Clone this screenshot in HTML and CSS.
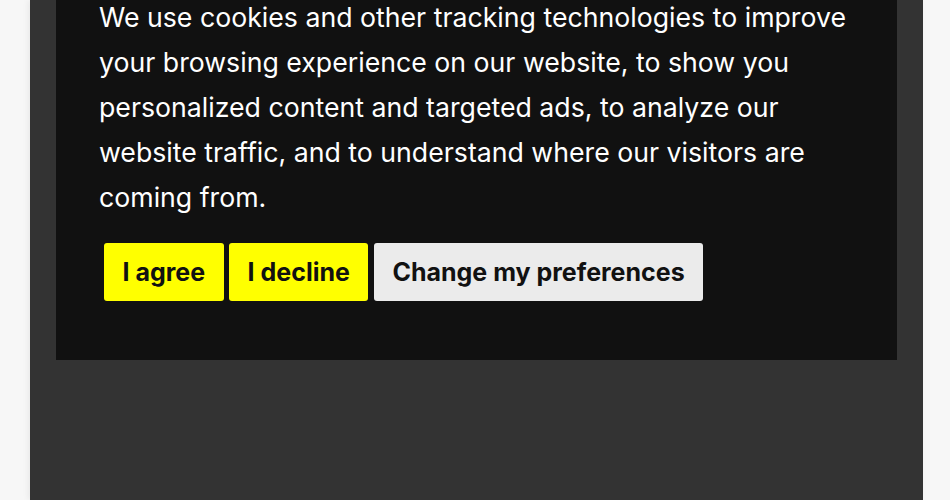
FILE: index.html
```html
<!DOCTYPE html>
<html lang="en">
<head>
<meta charset="utf-8">
<title>Cookie consent</title>
<link rel="stylesheet" href="styles.css">
</head>
<body>
<div class="page">
  <div class="panel">
    <div class="notice">
      <p class="message">We use cookies and other tracking technologies to improve your browsing experience on our website, to show you personalized content and targeted ads, to analyze our website traffic, and to understand where our visitors are coming from.</p>
      <div class="actions">
        <button class="btn btn-yellow">I agree</button>
        <button class="btn btn-yellow">I decline</button>
        <button class="btn btn-gray">Change my preferences</button>
      </div>
    </div>
  </div>
</div>
</body>
</html>
```
FILE: styles.css
```css
html, body {
  margin: 0;
  padding: 0;
  height: 100%;
  background: #f7f7f7;
  font-family: Inter, "Liberation Sans", sans-serif;
}
.page {
  height: 500px;
  padding: 0 27px 0 30px;
  overflow: hidden;
}
.panel {
  height: 100%;
  background: #333333;
  padding: 0 26px;
  box-shadow: -2px 0 6px rgba(0,0,0,0.06);
}
.notice {
  display: flow-root;
  background: #111111;
  height: 360px;
  box-sizing: border-box;
  padding: 0 43px;
}
.message {
  margin: -5px 0 0;
  color: #ffffff;
  font-size: 26.7px;
  line-height: 45px;
}
.actions {
  display: flex;
  gap: 5.5px;
  margin: 23px 0 0 5px;
}
.btn {
  height: 58px;
  border: none;
  border-radius: 3px;
  padding: 0 18.5px;
  font-family: Inter, "Liberation Sans", sans-serif;
  font-weight: 700;
  font-size: 25px;
  color: #111111;
}
.btn-yellow { background: #ffff00; }
.btn-gray { background: #ebebeb; }
```
